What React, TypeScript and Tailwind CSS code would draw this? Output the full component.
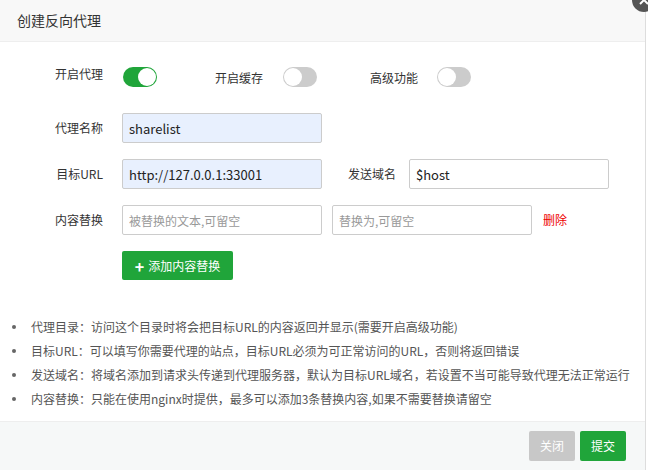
export default function App() {
  const font = { fontFamily: '"Microsoft YaHei", "Noto Sans CJK SC", sans-serif' };
  const Toggle = ({ on }: { on: boolean }) => (
    <div className={`w-[34px] h-[20px] rounded-full relative ${on ? "bg-[#20a53a]" : "bg-[#ccc]"}`}>
      <div className={`absolute top-[1px] w-[18px] h-[18px] rounded-full bg-white ${on ? "left-[15px]" : "left-[1px]"}`} />
    </div>
  );
  const inputCls = "w-[200px] h-[30px] border border-[#ccc] rounded-[2px] px-[6px] text-[12px] outline-none";
  return (
    <div className="w-[648px] h-[470px] bg-white relative overflow-hidden text-[#333]" style={font}>
      <div className="w-[646px] h-full border-r border-[#ddd] flex flex-col">
        <div className="h-[42px] bg-[#f8f8f8] border-b border-[#eee] flex items-center pl-[17px] text-[14px]">创建反向代理</div>
        <div className="flex-1 flex flex-col">
          <div className="flex items-center h-[20px] mt-[25px] text-[12px]">
            <span className="w-[103px] text-right -mt-[6px]">开启代理</span>
            <div className="ml-[20px]"><Toggle on /></div>
            <span className="ml-[58px] mt-[2px]">开启缓存</span>
            <div className="ml-[20px]"><Toggle on={false} /></div>
            <span className="ml-[53px] mt-[2px]">高级功能</span>
            <div className="ml-[19px]"><Toggle on={false} /></div>
          </div>
          <div className="flex items-center mt-[26px] text-[12px]">
            <span className="w-[103px] text-right">代理名称</span>
            <input className={`${inputCls} ml-[19px] bg-[#e8f0fe] text-[13px] text-[#222]`} defaultValue="sharelist" />
          </div>
          <div className="flex items-center mt-[16px] text-[12px]">
            <span className="w-[103px] text-right">目标URL</span>
            <input className={`${inputCls} ml-[19px] bg-[#e8f0fe] text-[13px] text-[#222]`} defaultValue="http://127.0.0.1:33001" />
            <span className="ml-[26px] w-[61px]">发送域名</span>
            <input className={`${inputCls} text-[13px] text-[#222]`} defaultValue="$host" />
          </div>
          <div className="flex items-center mt-[16px] text-[12px]">
            <span className="w-[103px] text-right">内容替换</span>
            <input className={`${inputCls} ml-[19px] placeholder-[#999]`} placeholder="被替换的文本,可留空" />
            <input className={`${inputCls} ml-[10px] placeholder-[#999]`} placeholder="替换为,可留空" />
            <span className="ml-[11px] text-[#e00]">删除</span>
          </div>
          <div className="ml-[122px] mt-[16px]">
            <button className="h-[29px] w-[111px] bg-[#20a53a] text-white text-[12px] rounded-[2px] flex items-center justify-center gap-[4px]">
              <span className="text-[16px] font-bold leading-none">+</span>添加内容替换
            </button>
          </div>
          <ul className="mt-[38px] text-[12px] text-[#555] flex flex-col gap-[6px] pl-[12px]">
            {[
              "代理目录：访问这个目录时将会把目标URL的内容返回并显示(需要开启高级功能)",
              "目标URL：可以填写你需要代理的站点，目标URL必须为可正常访问的URL，否则将返回错误",
              "发送域名：将域名添加到请求头传递到代理服务器，默认为目标URL域名，若设置不当可能导致代理无法正常运行",
              "内容替换：只能在使用nginx时提供，最多可以添加3条替换内容,如果不需要替换请留空",
            ].map((t) => (
              <li key={t} className="flex items-center h-[18px]">
                <span className="w-[4px] h-[4px] rounded-full bg-[#666] mr-[15px]" />{t}
              </li>
            ))}
          </ul>
        </div>
        <div className="h-[49px] bg-[#f6f8f8] border-t border-[#eee] flex items-center justify-end pr-[19px] gap-[5px]">
          <button className="w-[46px] h-[30px] bg-[#c8c8c8] text-white text-[12px] rounded-[2px]">关闭</button>
          <button className="w-[46px] h-[30px] bg-[#20a53a] text-white text-[12px] rounded-[2px]">提交</button>
        </div>
      </div>
      <svg className="absolute right-[-8px] top-[-12px]" width="24" height="24" viewBox="0 0 24 24">
        <circle cx="12" cy="12" r="12" fill="#555" />
        <path d="M8 8l8 8M16 8l-8 8" stroke="#fff" strokeWidth="2" />
      </svg>
    </div>
  );
}
